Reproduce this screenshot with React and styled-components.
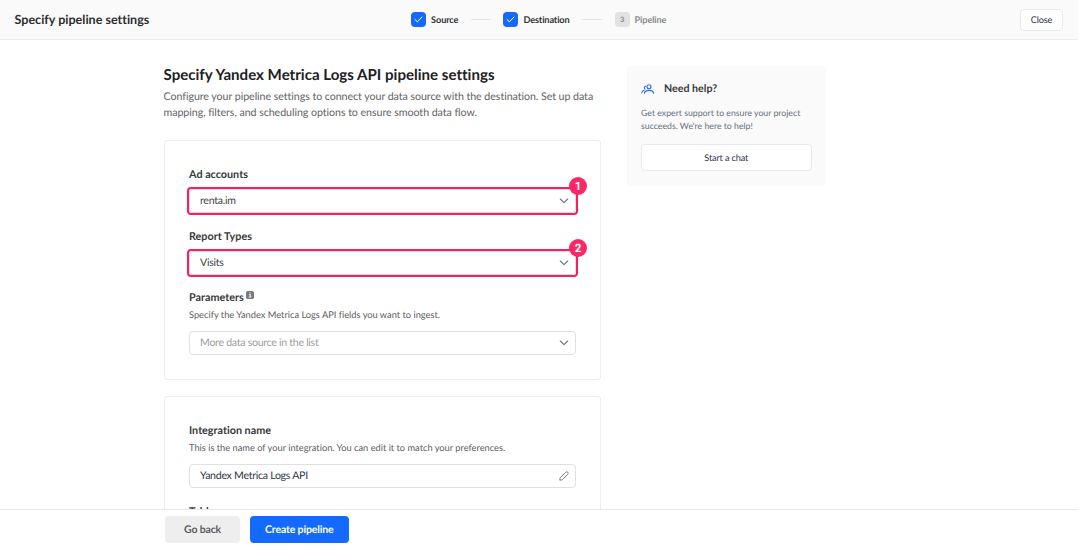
import React from "react";
import styled, { createGlobalStyle, css } from "styled-components";

const Global = createGlobalStyle`
  * { box-sizing: border-box; }
  html, body { margin: 0; height: 100%; overflow: hidden; background: #fff; }
  body {
    font-family: Lato, "Liberation Sans", sans-serif;
    color: #2e2e30;
    text-rendering: geometricPrecision;
    font-feature-settings: "liga" 0, "dlig" 0;
  }
  button { font-family: inherit; margin: 0; padding: 0; text-rendering: inherit; }
`;

const Page = styled.div`
  display: flex;
  flex-direction: column;
  width: 1078px;
  height: 549px;
  overflow: hidden;
`;

const Header = styled.header`
  flex: none;
  height: 40px;
  display: grid;
  grid-template-columns: 1fr auto 1fr;
  align-items: center;
  padding: 0 15px 0 14.5px;
  background: #fafafa;
  border-bottom: 1px solid #ebebeb;
`;

const HeaderTitle = styled.div`
  font-size: 12.55px;
  font-weight: 700;
  line-height: 16px;
  white-space: nowrap;
`;

const Steps = styled.div`
  display: flex;
  align-items: center;
`;

const Step = styled.div`
  display: flex;
  align-items: center;
  gap: 5px;
  font-size: 9.2px;
  letter-spacing: -0.13px;
  font-weight: 700;
  line-height: 12px;
  color: ${(p) => (p.$pending ? "#8b8b8d" : "#343436")};
`;

const StepMark = styled.span`
  display: flex;
  align-items: center;
  justify-content: center;
  width: 15px;
  height: 15px;
  border-radius: 4px;
  font-size: 7.5px;
  background: ${(p) => (p.$pending ? "#e2e2e2" : "#146aff")};
`;

const Connector = styled.span`
  width: 20px;
  height: 1px;
  margin: 0 12.5px;
  background: #e4e4e4;
`;

const OutlineButton = styled.button`
  display: flex;
  align-items: center;
  justify-content: center;
  justify-self: end;
  width: ${(p) => p.$width};
  height: ${(p) => p.$height};
  background: #fff;
  border: 1px solid #e9eaec;
  border-radius: 4px;
  font-size: 9.2px;
  letter-spacing: -0.16px;
  color: #2f3749;
`;

const Main = styled.main`
  flex: 1;
  min-height: 0;
  overflow: hidden;
  display: flex;
  align-items: flex-start;
  gap: 25.5px;
  padding: 26px 0 0 163.5px;
`;

const Content = styled.div`
  width: 437.5px;
  flex: none;
`;

const Title = styled.h1`
  margin: 0;
  font-size: 15.08px;
  font-weight: 700;
  line-height: 18px;
  color: #202022;
  white-space: nowrap;
`;

const Lead = styled.p`
  margin: 4.5px 0 19px;
  font-size: 10.67px;
  letter-spacing: -0.06px;
  line-height: 16px;
  color: #636365;
  white-space: nowrap;
`;

const Card = styled.section`
  border: 1px solid #ececec;
  border-radius: 3px;
  padding: 26px 24.5px 24.5px;
  margin-bottom: 15.5px;
`;

const Field = styled.div`
  display: flex;
  flex-direction: column;
  margin-bottom: ${(p) => p.$after || "0"};
`;

const Label = styled.div`
  display: flex;
  gap: 2px;
  font-size: 10.8px;
  font-weight: 700;
  line-height: 16px;
  color: #39393b;
`;

const Hint = styled.div`
  margin-top: 2px;
  font-size: 9.28px;
  line-height: 14px;
  color: #5d5d5f;
`;

const Control = styled.div`
  position: relative;
  display: flex;
  align-items: center;
  justify-content: space-between;
  height: 24px;
  margin-top: ${(p) => p.$before || "6.5px"};
  padding: 0 6px 0 10px;
  border: 1px solid #e0e0e2;
  border-radius: 4px;
  background: #fff;
  font-size: 10.6px;
  letter-spacing: -0.29px;
  color: ${(p) => p.$color || "#454547"};
`;

const Highlight = styled.span`
  position: absolute;
  inset: -3px;
  border: 2px solid #fb1d5c;
  border-radius: 4px;
`;

const Marker = styled.span`
  position: absolute;
  top: -13px;
  right: -12.5px;
  width: 18px;
  height: 18px;
  border-radius: 50%;
  background: #fb2865;
  color: #fff;
  font: 700 11.5px/18px Roboto, sans-serif;
  letter-spacing: 0;
  text-align: center;
`;

const Help = styled.aside`
  width: 199.5px;
  height: 119.5px;
  padding: 15px 14.5px 0 14.5px;
  background: #fafafa;
  border-radius: 3px;
`;

const HelpTitle = styled.div`
  display: flex;
  align-items: center;
  gap: 9px;
  font-size: 10.67px;
  font-weight: 700;
  line-height: 16px;
  color: #39393b;
`;

const HelpText = styled.p`
  margin: 9px 0 12px;
  font-size: 8.72px;
  line-height: 13px;
  color: #667080;
  white-space: nowrap;
`;

const Footer = styled.footer`
  flex: none;
  height: 40px;
  display: flex;
  gap: 10px;
  padding: 6px 0 0 165px;
  background: #fff;
  border-top: 1px solid #e9e9e9;
`;

const Action = styled.button`
  height: 26.5px;
  width: ${(p) => p.$width};
  border: 0;
  border-radius: 4px;
  font-size: 10.5px;
  letter-spacing: -0.15px;
  font-weight: 700;
  line-height: 14px;
  padding-top: 1px;
  ${(p) => p.$primary
    ? css`background: #146aff; color: #fff;`
    : css`background: #eeeeee; color: #5b5b5d;`}
`;

const Check = () => (
  <svg width="9" height="7" viewBox="0 0 9 7" fill="none" stroke="#fff" strokeWidth="1">
    <path d="M1 3.5 3.4 5.8 8 1" strokeLinecap="round" strokeLinejoin="round" />
  </svg>
);

const Chevron = () => (
  <svg width="10" height="6" viewBox="0 0 10 6" fill="none" stroke="#6b7382" strokeWidth="1.1">
    <path d="M1.3 1 5 4.7 8.7 1" strokeLinecap="round" strokeLinejoin="round" />
  </svg>
);

const Pencil = () => (
  <svg width="10" height="10" viewBox="0 0 10 10" fill="none" stroke="#6f7480" strokeWidth=".9" strokeLinejoin="round">
    <path d="M.8 9.2 1.1 6.9 6.8 1.2a1.35 1.35 0 0 1 2 2L3.1 8.9Z" />
  </svg>
);

const InfoIcon = styled.svg`
  margin-top: 1.5px;
`;

const Info = () => (
  <InfoIcon width="8" height="8" viewBox="0 0 8 8">
    <rect width="8" height="8" rx="1.8" fill="#7a7a7c" />
    <path d="M3 3.4h1.2v2.5M2.8 6h2.6M3.5 1.8h1" stroke="#fff" strokeWidth="1" fill="none" />
  </InfoIcon>
);

const People = () => (
  <svg width="14" height="10" viewBox="0 0 14 10" fill="none" stroke="#2b74fa" strokeWidth="1.15" strokeLinecap="round">
    <circle cx="8" cy="2.7" r="2" />
    <path d="M3.3 9.3c.5-1.9 2.2-2.9 4.7-2.9s4.2 1 4.7 2.9M4.7 2.2a1.6 1.6 0 0 0-.8 2.8M.8 8.6c.2-1.2 1-2 2.4-2.3" />
  </svg>
);

function Select({ color, before, marker, children }) {
  return (
    <Control $color={color} $before={before}>
      {children}
      <Chevron />
      {marker && <Highlight />}
      {marker && <Marker>{marker}</Marker>}
    </Control>
  );
}

export default function App() {
  return (
    <Page>
      <Global />
      <Header>
        <HeaderTitle>Specify pipeline settings</HeaderTitle>
        <Steps>
          <Step><StepMark><Check /></StepMark>Source</Step>
          <Connector />
          <Step><StepMark><Check /></StepMark>Destination</Step>
          <Connector />
          <Step $pending><StepMark $pending>3</StepMark>Pipeline</Step>
        </Steps>
        <OutlineButton $width="43px" $height="22px">Close</OutlineButton>
      </Header>
      <Main>
        <Content>
          <Title>Specify Yandex Metrica Logs API pipeline settings</Title>
          <Lead>
            Configure your pipeline settings to connect your data source with the destination. Set up data
            <br />
            mapping, filters, and scheduling options to ensure smooth data flow.
          </Lead>
          <Card>
            <Field $after="15.5px">
              <Label>Ad accounts</Label>
              <Select marker="1">renta.im</Select>
            </Field>
            <Field $after="14.5px">
              <Label>Report Types</Label>
              <Select marker="2">Visits</Select>
            </Field>
            <Field>
              <Label>Parameters<Info /></Label>
              <Hint>Specify the Yandex Metrica Logs API fields you want to ingest.</Hint>
              <Select color="#9d9d9f" before="9px">More data source in the list</Select>
            </Field>
          </Card>
          <Card>
            <Field $after="16px">
              <Label>Integration name</Label>
              <Hint>This is the name of your integration. You can edit it to match your preferences.</Hint>
              <Control $before="9px" $color="#2f3749">Yandex Metrica Logs API<Pencil /></Control>
            </Field>
            <Field>
              <Label>Table name</Label>
            </Field>
          </Card>
        </Content>
        <Help>
          <HelpTitle><People />Need help?</HelpTitle>
          <HelpText>
            Get expert support to ensure your project
            <br />
            succeeds. We're here to help!
          </HelpText>
          <OutlineButton $width="170.5px" $height="27px">Start a chat</OutlineButton>
        </Help>
      </Main>
      <Footer>
        <Action $width="75px">Go back</Action>
        <Action $primary $width="98.5px">Create pipeline</Action>
      </Footer>
    </Page>
  );
}
